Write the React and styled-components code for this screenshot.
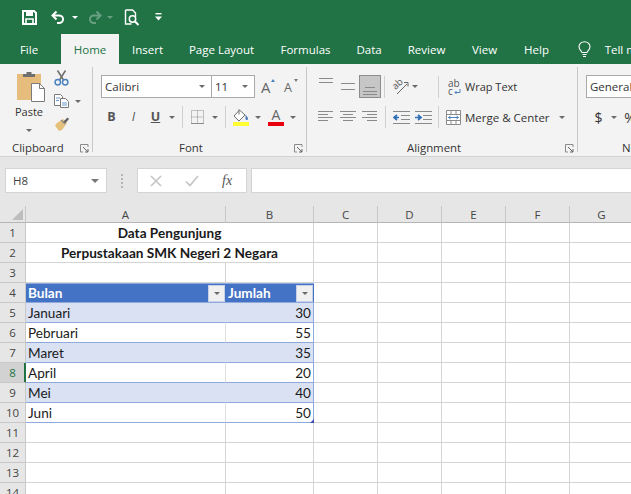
import React from "react";
import styled, { createGlobalStyle } from "styled-components";

const Global = createGlobalStyle`
  html, body { margin: 0; padding: 0; background: #fff; overflow: hidden; }
  #root { width: 631px; height: 494px; overflow: hidden; }
  * { box-sizing: border-box; }
`;

const UI = `"Open Sans", "Noto Sans", sans-serif`;
const CELL = `"Lato", "Open Sans", sans-serif`;

const Page = styled.div`
  width: 631px; height: 494px; overflow: hidden; display: flex; flex-direction: column;
  font-family: ${UI}; background: #fff;
`;
const TitleBar = styled.div`
  height: 34px; background: #217346; display: flex; align-items: center; padding-left: 22px; flex: none;
`;
const QatButton = styled.div`
  width: ${p => p.$w}px; margin-left: ${p => p.$ml || 0}px; height: 16px; display: flex; align-items: center; justify-content: center; flex: none;
  opacity: ${p => (p.$dim ? 0.32 : 1)};
`;
const TabBar = styled.div`
  height: 30px; background: #217346; display: flex; align-items: stretch; flex: none;
`;
const Tab = styled.div`
  margin-left: ${p => p.$ml || 0}px;
  width: ${p => p.$w}px; display: flex; align-items: center; justify-content: center; flex: none; white-space: nowrap;
  font-size: 11.5px; padding-top: 1px; color: ${p => (p.$active ? "#217346" : "#fff")};
  background: ${p => (p.$active ? "#f3f3f3" : "transparent")};
`;
const Ribbon = styled.div`
  height: 93px; flex: none; background: #f3f3f3; border-bottom: 1px solid #d2d2d2; display: flex; overflow: hidden;
`;
const Group = styled.section`
  width: ${p => p.$w}px; flex: none; height: 92px; display: flex; flex-direction: column; padding-left: ${p => p.$pad || 0}px;
`;
const GroupEdge = styled.div`
  width: 1px; height: 85px; margin-top: 3px; background: #c8c8c8; flex: none;
`;
const ClipBody = styled.div`
  display: flex; height: 76px; padding-top: 6px; flex: none;
`;
const PasteColumn = styled.div`
  width: 34px; margin-left: 14px; display: flex; flex-direction: column; align-items: center; flex: none;
`;
const PasteLabel = styled.div`
  font-size: 11px; color: #333; line-height: 16px; margin: 2px 4px 0 0;
`;
const PasteCaret = styled.div`
  margin: 6px 5px 0 0; line-height: 0;
`;
const SmallColumn = styled.div`
  margin-left: 6px; display: flex; flex-direction: column; gap: 8px;
`;
const Row = styled.div`
  height: ${p => p.$h || 23}px; display: flex; align-items: center; flex: none; margin-top: ${p => p.$mt || 0}px;
`;
const Tool = styled.div`
  width: ${p => p.$w}px; margin-left: ${p => p.$ml || 0}px; flex: none; display: flex; align-items: center; justify-content: center;
  height: ${p => p.$h || 20}px;
`;
const ActiveTool = styled(Tool)`
  background: #c6c6c6; border: 1px solid #8c8c8c; height: 23px;
`;
const ToolDivider = styled.div`
  width: 1px; height: 22px; background: #d0d0d0; flex: none; margin-left: ${p => p.$ml || 0}px;
`;
const SelectBox = styled.div`
  width: ${p => p.$w}px; height: 23px; margin-left: ${p => p.$ml || 0}px; background: #fff; border: 1px solid #a9a9a9; flex: none;
  display: flex; align-items: center; justify-content: space-between; padding: 0 6px 0 3px; font-size: 11.5px; color: #333; white-space: nowrap; overflow: hidden;
`;
const Caret = styled.span`
  display: inline-block; flex: none; width: 0; height: 0;
  border-left: ${p => p.$s || 3}px solid transparent; border-right: ${p => p.$s || 3}px solid transparent;
  border-top: ${p => p.$s || 3}px solid ${p => p.$c || "#6a6a6a"};
`;
const Letter = styled.span`
  font-family: ${UI}; font-size: ${p => p.$size || 12.5}px; font-weight: ${p => p.$weight || 700};
  font-style: ${p => (p.$italic ? "italic" : "normal")}; color: ${p => p.$c || "#555"};
  text-decoration: ${p => (p.$under ? "underline" : "none")}; line-height: ${p => p.$lh || "16px"};
`;
const ToolText = styled.span`
  font-size: ${p => p.$size || 11.5}px; color: #333; white-space: nowrap; margin-left: ${p => p.$ml || 0}px; flex: none;
`;
const GroupFooter = styled.div`
  margin-top: auto; margin-left: -${p => p.$pad || 0}px; height: 16px; flex: none; display: flex; align-items: center; justify-content: space-between;
  padding: 0 3px 0 ${p => p.$left}px;
`;
const GroupLabel = styled.span`
  font-size: 11.4px; line-height: 16px; color: #333; white-space: nowrap;
`;
const GrowMark = styled.div`
  width: 14px; height: 23px; position: relative; display: flex; align-items: flex-end; padding-bottom: 3px;
`;
const GrowArrow = styled.span`
  position: absolute; right: 0; top: 4px; width: 0; height: 0;
  border-left: 2.5px solid transparent; border-right: 2.5px solid transparent;
  ${p => (p.$down ? "border-top: 3px solid #7a7a7a;" : "border-bottom: 3px solid #4a82bd;")}
`;
const ColorMark = styled.div`
  width: 16px; height: 18px; display: flex; flex-direction: column; align-items: center; justify-content: flex-end;
`;
const ColorBar = styled.span`
  display: block; width: 16px; height: 4px; background: #e8000d; flex: none;
`;
const OrientMark = styled.div`
  width: 16px; height: 16px; position: relative;
`;
const OrientText = styled.span`
  position: absolute; left: -1px; top: 0; font-size: 9.5px; line-height: 10px; color: #555; transform: rotate(-42deg);
`;
const WrapMark = styled.div`
  width: 14px; display: flex; flex-direction: column; line-height: 8px; font-size: 10px; color: #555;
`;
const WrapLine = styled.div`
  display: flex; align-items: flex-end; gap: 1px; height: 8px;
`;
const FormulaArea = styled.div`
  height: 49px; flex: none; background: #e6e6e6; display: flex; padding: 11px 0 0 5px;
`;
const NameBox = styled.div`
  width: 102px; height: 25px; background: #fff; border: 1px solid #d4d4d4; display: flex; align-items: center; justify-content: space-between;
  padding: 0 7px 0 7px; font-size: 11.5px; color: #444; flex: none;
`;
const Dots = styled.div`
  width: 30px; flex: none; height: 25px; display: flex; flex-direction: column; align-items: center; justify-content: center; gap: 2px;
`;
const Dot = styled.span`
  width: 2px; height: 2px; background: #b5b5b5; display: block;
`;
const FuncBox = styled.div`
  width: 110px; height: 25px; background: #fff; border: 1px solid #d4d4d4; display: flex; align-items: center; flex: none; padding-left: 12px; gap: 23px;
`;
const FxMark = styled.span`
  font-family: "Liberation Serif", serif; font-style: italic; font-size: 14px; color: #555;
`;
const FormulaInput = styled.div`
  flex: 1; height: 25px; margin-left: 4px; background: #fff; border: 1px solid #d4d4d4; border-right: none;
`;
const Sheet = styled.div`
  display: grid; grid-template-columns: 26px 200px 88px 64px 64px 64px 64px 64px; grid-auto-rows: 20px; flex: none; width: 634px;
  grid-template-rows: 17px; font-family: ${CELL}; font-size: 13.6px; color: #1a1a1a;
`;
const Corner = styled.div`
  background: #e6e6e6; border-right: 1px solid #c8c8c8; border-bottom: 1px solid #b5b5b5; display: flex; justify-content: flex-end; align-items: flex-end; padding: 0 2px 2px 0;
`;
const CornerMark = styled.span`
  width: 0; height: 0; border-left: 11px solid transparent; border-bottom: 11px solid #bdbdbd;
`;
const ColHead = styled.div`
  background: #e6e6e6; border-right: 1px solid #c8c8c8; border-bottom: 1px solid #b5b5b5; display: flex; align-items: center; justify-content: center;
  font-family: ${UI}; font-size: 11.5px; color: #444;
`;
const RowHead = styled.div`
  background: ${p => (p.$sel ? "#d2d2d2" : "#e6e6e6")}; border-right: 1px solid ${p => (p.$sel ? "#217346" : "#c8c8c8")}; box-shadow: ${p => (p.$sel ? "inset -1px 0 0 #217346" : "none")};
  border-bottom: 1px solid #c8c8c8; display: flex; align-items: center; justify-content: center;
  font-family: ${UI}; font-size: 11.5px; color: ${p => (p.$sel ? "#217346" : "#444")};
`;
const Cell = styled.div`
  background: #fff; border-right: 1px solid #d4d4d4; border-bottom: 1px solid #d4d4d4; padding: 0 2px; display: flex; align-items: center; white-space: nowrap;
  overflow: hidden;
`;
const TitleCell = styled(Cell)`
  grid-column: span 2; justify-content: center; font-weight: 700;
`;
const HeadCell = styled.div`
  background: #4472c4; color: #fff; font-weight: 700; padding: 0 1px 0 2px; display: flex; align-items: center; justify-content: space-between;
  border-top: 1px solid #8ea9db; border-bottom: 1px solid #8ea9db;
`;
const FilterBtn = styled.div`
  width: 17px; height: 17px; background: #f0f0f0; border: 1px solid #c6d0e6; display: flex; align-items: center; justify-content: center; flex: none;
`;
const DataCell = styled.div`
  background: ${p => (p.$band ? "#d9e1f2" : "#fff")}; border-bottom: 1px solid #8ea9db; display: flex; align-items: center; padding: 0 2px; position: relative;
  justify-content: ${p => (p.$num ? "flex-end" : "flex-start")};
  border-right: 1px solid ${p => (p.$num ? "#8ea9db" : p.$band ? "#d9e1f2" : "#e0e0e0")};
`;
const ResizeMark = styled.span`
  position: absolute; right: -1px; bottom: -1px; width: 0; height: 0; border-left: 4px solid transparent; border-bottom: 4px solid #3f4fb8;
`;

const W = "#ffffff";
const Ic = ({ w, h, children }) => <svg width={w} height={h} viewBox={`0 0 ${w} ${h}`} style={{ display: "block", flex: "none" }}>{children}</svg>;

const SaveIcon = () => (
  <Ic w={15} h={15}>
    <path d="M1 1h11l2 2v11H1z" fill="none" stroke={W} strokeWidth="2" />
    <rect x="4" y="1" width="7" height="5" fill={W} />
    <path d="M4 14V9h7v5" fill="none" stroke={W} strokeWidth="1.6" />
  </Ic>
);
const UndoIcon = ({ flip }) => (
  <Ic w={14} h={14}>
    <g transform={flip ? "translate(14 0) scale(-1 1)" : undefined}>
      <path d="M5.5 1.5 1.5 5.5l4 4" fill="none" stroke={W} strokeWidth="2" />
      <path d="M2 5.5h6a4 3.7 0 0 1 0 7.500H6" fill="none" stroke={W} strokeWidth="2" />
    </g>
  </Ic>
);
const PreviewIcon = () => (
  <Ic w={16} h={17}>
    <path d="M1.500 1h7l3 3v4M1.500 1v14h6" fill="none" stroke={W} strokeWidth="1.400" />
    <circle cx="8.500" cy="10" r="3.200" fill="none" stroke={W} strokeWidth="1.500" />
    <path d="m11 12.500 3.500 3.500" stroke={W} strokeWidth="2" />
  </Ic>
);
const CustomizeIcon = () => (
  <Ic w={7} h={8}>
    <rect x="0.500" y="0" width="6" height="1.400" fill={W} />
    <path d="M0 3.600h7L3.500 7.600z" fill={W} />
  </Ic>
);
const BulbIcon = () => (
  <Ic w={13} h={17}>
    <path d="M4 11.500C3.600 9.700 1 8.700 1 5.700A5.500 5 0 0 1 12 5.700c0 3-2.600 4-3 5.800z" fill="none" stroke={W} strokeWidth="1.100" />
    <path d="M4.500 13.500h4M5 15.500h3" stroke={W} strokeWidth="1.100" />
  </Ic>
);
const PasteIcon = () => (
  <Ic w={30} h={32}>
    <rect x="1" y="4" width="24" height="26" fill="#e6bd7c" />
    <path d="M7 7V4h3.500V2h5v2H19v3z" fill="#6f6f6f" />
    <path d="M15.500 13.500h8l5 5v13h-13z" fill="#fff" stroke="#7b7b7b" />
    <path d="M23.500 13.500v5h5" fill="none" stroke="#7b7b7b" />
  </Ic>
);
const CutIcon = () => (
  <Ic w={15} h={16}>
    <path d="M3.500 0.500 9.500 10M11.500 0.500 5.500 10" stroke="#6e6e6e" strokeWidth="1.500" fill="none" />
    <circle cx="3.800" cy="12.200" r="2.700" fill="none" stroke="#4a82bd" strokeWidth="1.500" />
    <circle cx="11.200" cy="12.200" r="2.700" fill="none" stroke="#4a82bd" strokeWidth="1.500" />
  </Ic>
);
const CopyIcon = () => (
  <Ic w={15} h={14}>
    <path d="M0.500 0.500h6l2 2v9H0.500z" fill="#fff" stroke="#7a7a7a" />
    <path d="M6.500 4.500h5l3 3v6h-8z" fill="#fff" stroke="#7a7a7a" />
    <path d="M2 4h4M2 6.500h3M8 9h5M8 11h5" stroke="#5a8ec4" strokeWidth="0.900" />
  </Ic>
);
const PainterIcon = () => (
  <Ic w={16} h={15}>
    <path d="M9 3 13 7 8 14 5 15 1 9.500 3 7z" fill="#e5c07b" />
    <path d="M9.500 5.500 13.500 1.500 15 3 11 7.500z" fill="#5e5e5e" />
    <path d="M7 4 11 8" stroke="#8d8d8d" strokeWidth="1.400" />
  </Ic>
);
const LauncherIcon = () => (
  <Ic w={9} h={9}>
    <path d="M8 3V0.500H0.500V8H3" fill="none" stroke="#8a8a8a" />
    <path d="M3 3 8 8M8 5v3H5" fill="none" stroke="#666" />
  </Ic>
);
const BordersIcon = () => (
  <Ic w={13} h={14}>
    <path d="M0.500 0.500h12v13H0.500zM6.500 0.500v13M0.500 7h12" fill="none" stroke="#8a8a8a" strokeDasharray="1 1" />
    <path d="M0 13.500h13" stroke="#8a8a8a" />
  </Ic>
);
const FillIcon = () => (
  <Ic w={17} h={17}>
    <path d="M6.500 1 1 7l5 5 6-6z" fill="#fff" stroke="#707070" />
    <path d="M6 0.500v5" stroke="#707070" />
    <path d="M12 5.500c2 2 3 3 3 4.500a1.300 1.300 0 0 1-2.500 0c0-1 .5-2 -.5-4.500z" fill="#3f73b6" />
    <rect x="0" y="13" width="16" height="4" fill="#ffff33" />
  </Ic>
);
const LinesIcon = ({ spec, w = 16, h = 12, c = "#8a8a8a" }) => (
  <Ic w={w} h={h}>
    {spec.map(([y, x1, x2], i) => <path key={i} d={`M${x1} ${y + 0.5}H${x2}`} stroke={c} strokeWidth="1" />)}
  </Ic>
);
const OrientArrow = () => (
  <Ic w={16} h={16}>
    <path d="M4 15 14 5" stroke="#666" />
    <path d="M11 3.500h4v4" fill="none" stroke="#666" />
  </Ic>
);
const IndentIcon = ({ right }) => (
  <Ic w={17} h={13}>
    <path d={right ? "M0 6.500h5M3 4l3 2.500L3 9" : "M6 6.500H1M4 4 1 6.500 4 9"} fill="none" stroke="#2f6db5" strokeWidth="1.700" />
    <path d="M0 0.500h17M8 4.500h9M8 8.500h9M0 12.500h17" stroke="#8a8a8a" />
  </Ic>
);
const ReturnIcon = () => (
  <Ic w={7} h={6}>
    <path d="M6 0v3.500H1M2.500 2 1 3.500 2.500 5" fill="none" stroke="#4a82bd" />
  </Ic>
);
const MergeIcon = () => (
  <Ic w={15} h={15}>
    <path d="M0.500 0.500h14v14H0.500zM0.500 4.500h14M0.500 10.500h14M5 0.500v4M10 0.500v4M5 10.500v4M10 10.500v4" fill="#fff" stroke="#8a8a8a" />
    <path d="M2.500 7.500h10M4.500 6l-2 1.500 2 1.500M10.500 6l2 1.500-2 1.500" fill="none" stroke="#4a82bd" />
  </Ic>
);
const XIcon = () => (
  <Ic w={12} h={12}><path d="m1 1 10 10M11 1 1 11" stroke="#c4c4c4" strokeWidth="1.600" /></Ic>
);
const CheckIcon = () => (
  <Ic w={14} h={12}><path d="m1 6.500 4 4L13 1" fill="none" stroke="#c4c4c4" strokeWidth="1.600" /></Ic>
);

const cols = ["A", "B", "C", "D", "E", "F", "G"];
const data = [["Januari", 30], ["Pebruari", 55], ["Maret", 35], ["April", 20], ["Mei", 40], ["Juni", 50]];
const Blanks = ({ n = 5 }) => Array.from({ length: n }, (_, i) => <Cell key={i} />);

export default function App() {
  return (
    <Page>
      <Global />
      <TitleBar>
        <SaveIcon />
        <QatButton $w={14} $ml={14}><UndoIcon /></QatButton>
        <QatButton $w={6} $ml={7}><Caret $c="#fff" /></QatButton>
        <QatButton $w={14} $ml={10} $dim><UndoIcon flip /></QatButton>
        <QatButton $w={6} $ml={5} $dim><Caret $c="#fff" /></QatButton>
        <QatButton $w={16} $ml={11}><PreviewIcon /></QatButton>
        <QatButton $w={7} $ml={15}><CustomizeIcon /></QatButton>
      </TitleBar>
      <TabBar>
        <Tab $w={18} $ml={20}>File</Tab>
        <Tab $w={58} $ml={23} $active>Home</Tab>
        <Tab $w={29} $ml={14}>Insert</Tab>
        <Tab $w={65} $ml={27}>Page Layout</Tab>
        <Tab $w={49} $ml={27}>Formulas</Tab>
        <Tab $w={24} $ml={27}>Data</Tab>
        <Tab $w={37} $ml={27}>Review</Tab>
        <Tab $w={25} $ml={27}>View</Tab>
        <Tab $w={25} $ml={27}>Help</Tab>
        <Tab $w={13} $ml={29}><BulbIcon /></Tab>
        <Tab $w={50} $ml={8}>Tell me</Tab>
      </TabBar>
      <Ribbon>
        <Group $w={92}>
          <ClipBody>
            <PasteColumn>
              <PasteIcon />
              <PasteLabel>Paste</PasteLabel>
              <PasteCaret><Caret /></PasteCaret>
            </PasteColumn>
            <SmallColumn>
              <CutIcon />
              <Row $h={14}>
                <CopyIcon />
                <Tool $w={6} $ml={6} $h={14}><Caret /></Tool>
              </Row>
              <PainterIcon />
            </SmallColumn>
          </ClipBody>
          <GroupFooter $left={12}><GroupLabel>Clipboard</GroupLabel><LauncherIcon /></GroupFooter>
        </Group>
        <GroupEdge />
        <Group $w={213} $pad={8}>
          <Row $mt={11}>
            <SelectBox $w={111}>Calibri<Caret /></SelectBox>
            <SelectBox $w={44} $ml={-1}>11<Caret /></SelectBox>
            <Tool $w={14} $ml={6} $h={23}>
              <GrowMark><Letter $size={15} $weight={400} $c="#666" $lh="15px">A</Letter><GrowArrow /></GrowMark>
            </Tool>
            <Tool $w={14} $ml={9} $h={23}>
              <GrowMark><Letter $size={12.5} $weight={400} $c="#666" $lh="14px">A</Letter><GrowArrow $down /></GrowMark>
            </Tool>
          </Row>
          <Row $mt={8} $h={22}>
            <Tool $w={11} $ml={5}><Letter>B</Letter></Tool>
            <Tool $w={11} $ml={11}><Letter $italic $weight={400}>I</Letter></Tool>
            <Tool $w={11} $ml={11}><Letter $under>U</Letter></Tool>
            <Tool $w={6} $ml={8}><Caret /></Tool>
            <ToolDivider $ml={7} />
            <Tool $w={13} $ml={8}><BordersIcon /></Tool>
            <Tool $w={6} $ml={8}><Caret /></Tool>
            <ToolDivider $ml={7} />
            <Tool $w={17} $ml={7}><FillIcon /></Tool>
            <Tool $w={6} $ml={5}><Caret /></Tool>
            <Tool $w={16} $ml={7}>
              <ColorMark><Letter $size={14} $weight={400} $c="#666" $lh="14px">A</Letter><ColorBar /></ColorMark>
            </Tool>
            <Tool $w={6} $ml={6}><Caret /></Tool>
          </Row>
          <GroupFooter $pad={8} $left={86}><GroupLabel>Font</GroupLabel><LauncherIcon /></GroupFooter>
        </Group>
        <GroupEdge />
        <Group $w={270} $pad={11}>
          <Row $mt={11}>
            <Tool $w={16} $h={23}><LinesIcon h={23} spec={[[3, 1, 15], [7, 1, 15]]} /></Tool>
            <Tool $w={16} $ml={6} $h={23}><LinesIcon h={23} spec={[[8, 1, 15], [14, 1, 15]]} /></Tool>
            <ActiveTool $w={22} $ml={3}><LinesIcon h={21} spec={[[11, 3, 13], [15, 1, 15], [18, 1, 15]]} /></ActiveTool>
            <ToolDivider $ml={3} />
            <Tool $w={16} $ml={8} $h={23}>
              <OrientMark><OrientText>ab</OrientText><OrientArrow /></OrientMark>
            </Tool>
            <Tool $w={6} $ml={3} $h={23}><Caret /></Tool>
            <ToolDivider $ml={20} />
            <Tool $w={14} $ml={9} $h={23}>
              <WrapMark><WrapLine>ab</WrapLine><WrapLine>c<ReturnIcon /></WrapLine></WrapMark>
            </Tool>
            <ToolText $ml={3} $size={11}>Wrap Text</ToolText>
          </Row>
          <Row $mt={8} $h={22}>
            <Tool $w={16}><LinesIcon spec={[[0, 0, 15], [3, 0, 10], [6, 0, 15], [9, 0, 10]]} /></Tool>
            <Tool $w={16} $ml={6}><LinesIcon spec={[[0, 0, 16], [3, 3, 13], [6, 0, 16], [9, 3, 13]]} /></Tool>
            <Tool $w={16} $ml={6}><LinesIcon spec={[[0, 0, 15], [3, 5, 15], [6, 0, 15], [9, 5, 15]]} /></Tool>
            <ToolDivider $ml={7} />
            <Tool $w={17} $ml={7}><IndentIcon /></Tool>
            <Tool $w={17} $ml={5}><IndentIcon right /></Tool>
            <ToolDivider $ml={6} />
            <Tool $w={15} $ml={7}><MergeIcon /></Tool>
            <ToolText $ml={4}>Merge &amp; Center</ToolText>
            <Tool $w={6} $ml={9}><Caret /></Tool>
          </Row>
          <GroupFooter $pad={11} $left={100}><GroupLabel>Alignment</GroupLabel><LauncherIcon /></GroupFooter>
        </Group>
        <GroupEdge />
        <Group $w={60} $pad={8}>
          <Row $mt={11}>
            <SelectBox $w={70}>General</SelectBox>
          </Row>
          <Row $mt={8} $h={22}>
            <Tool $w={11} $ml={7}><ToolText $size={14}>$</ToolText></Tool>
            <Tool $w={6} $ml={7}><Caret /></Tool>
            <Tool $w={12} $ml={7}><ToolText $size={14}>%</ToolText></Tool>
          </Row>
          <GroupFooter $pad={8} $left={44}><GroupLabel>N</GroupLabel></GroupFooter>
        </Group>
      </Ribbon>
      <FormulaArea>
        <NameBox>H8<Caret $s={4} $c="#777" /></NameBox>
        <Dots><Dot /><Dot /><Dot /><Dot /></Dots>
        <FuncBox><XIcon /><CheckIcon /><FxMark>fx</FxMark></FuncBox>
        <FormulaInput />
      </FormulaArea>
      <Sheet>
        <Corner><CornerMark /></Corner>
        {cols.map(c => <ColHead key={c}>{c}</ColHead>)}

        <RowHead>1</RowHead><TitleCell>Data Pengunjung</TitleCell><Blanks />
        <RowHead>2</RowHead><TitleCell>Perpustakaan SMK Negeri 2 Negara</TitleCell><Blanks />
        <RowHead>3</RowHead><Cell /><Cell /><Blanks />
        <RowHead>4</RowHead>
        <HeadCell>Bulan<FilterBtn><Caret /></FilterBtn></HeadCell>
        <HeadCell>Jumlah<FilterBtn><Caret /></FilterBtn></HeadCell>
        <Blanks />
        {data.map(([m, v], i) => (
          <React.Fragment key={m}>
            <RowHead $sel={m === "April"}>{i + 5}</RowHead>
            <DataCell $band={i % 2 === 0}>{m}</DataCell>
            <DataCell $band={i % 2 === 0} $num>{v}{m === "Juni" && <ResizeMark />}</DataCell>
            <Blanks />
          </React.Fragment>
        ))}
        {[11, 12, 13, 14].map(n => (
          <React.Fragment key={n}>
            <RowHead>{n}</RowHead><Cell /><Cell /><Blanks />
          </React.Fragment>
        ))}
      </Sheet>
    </Page>
  );
}
